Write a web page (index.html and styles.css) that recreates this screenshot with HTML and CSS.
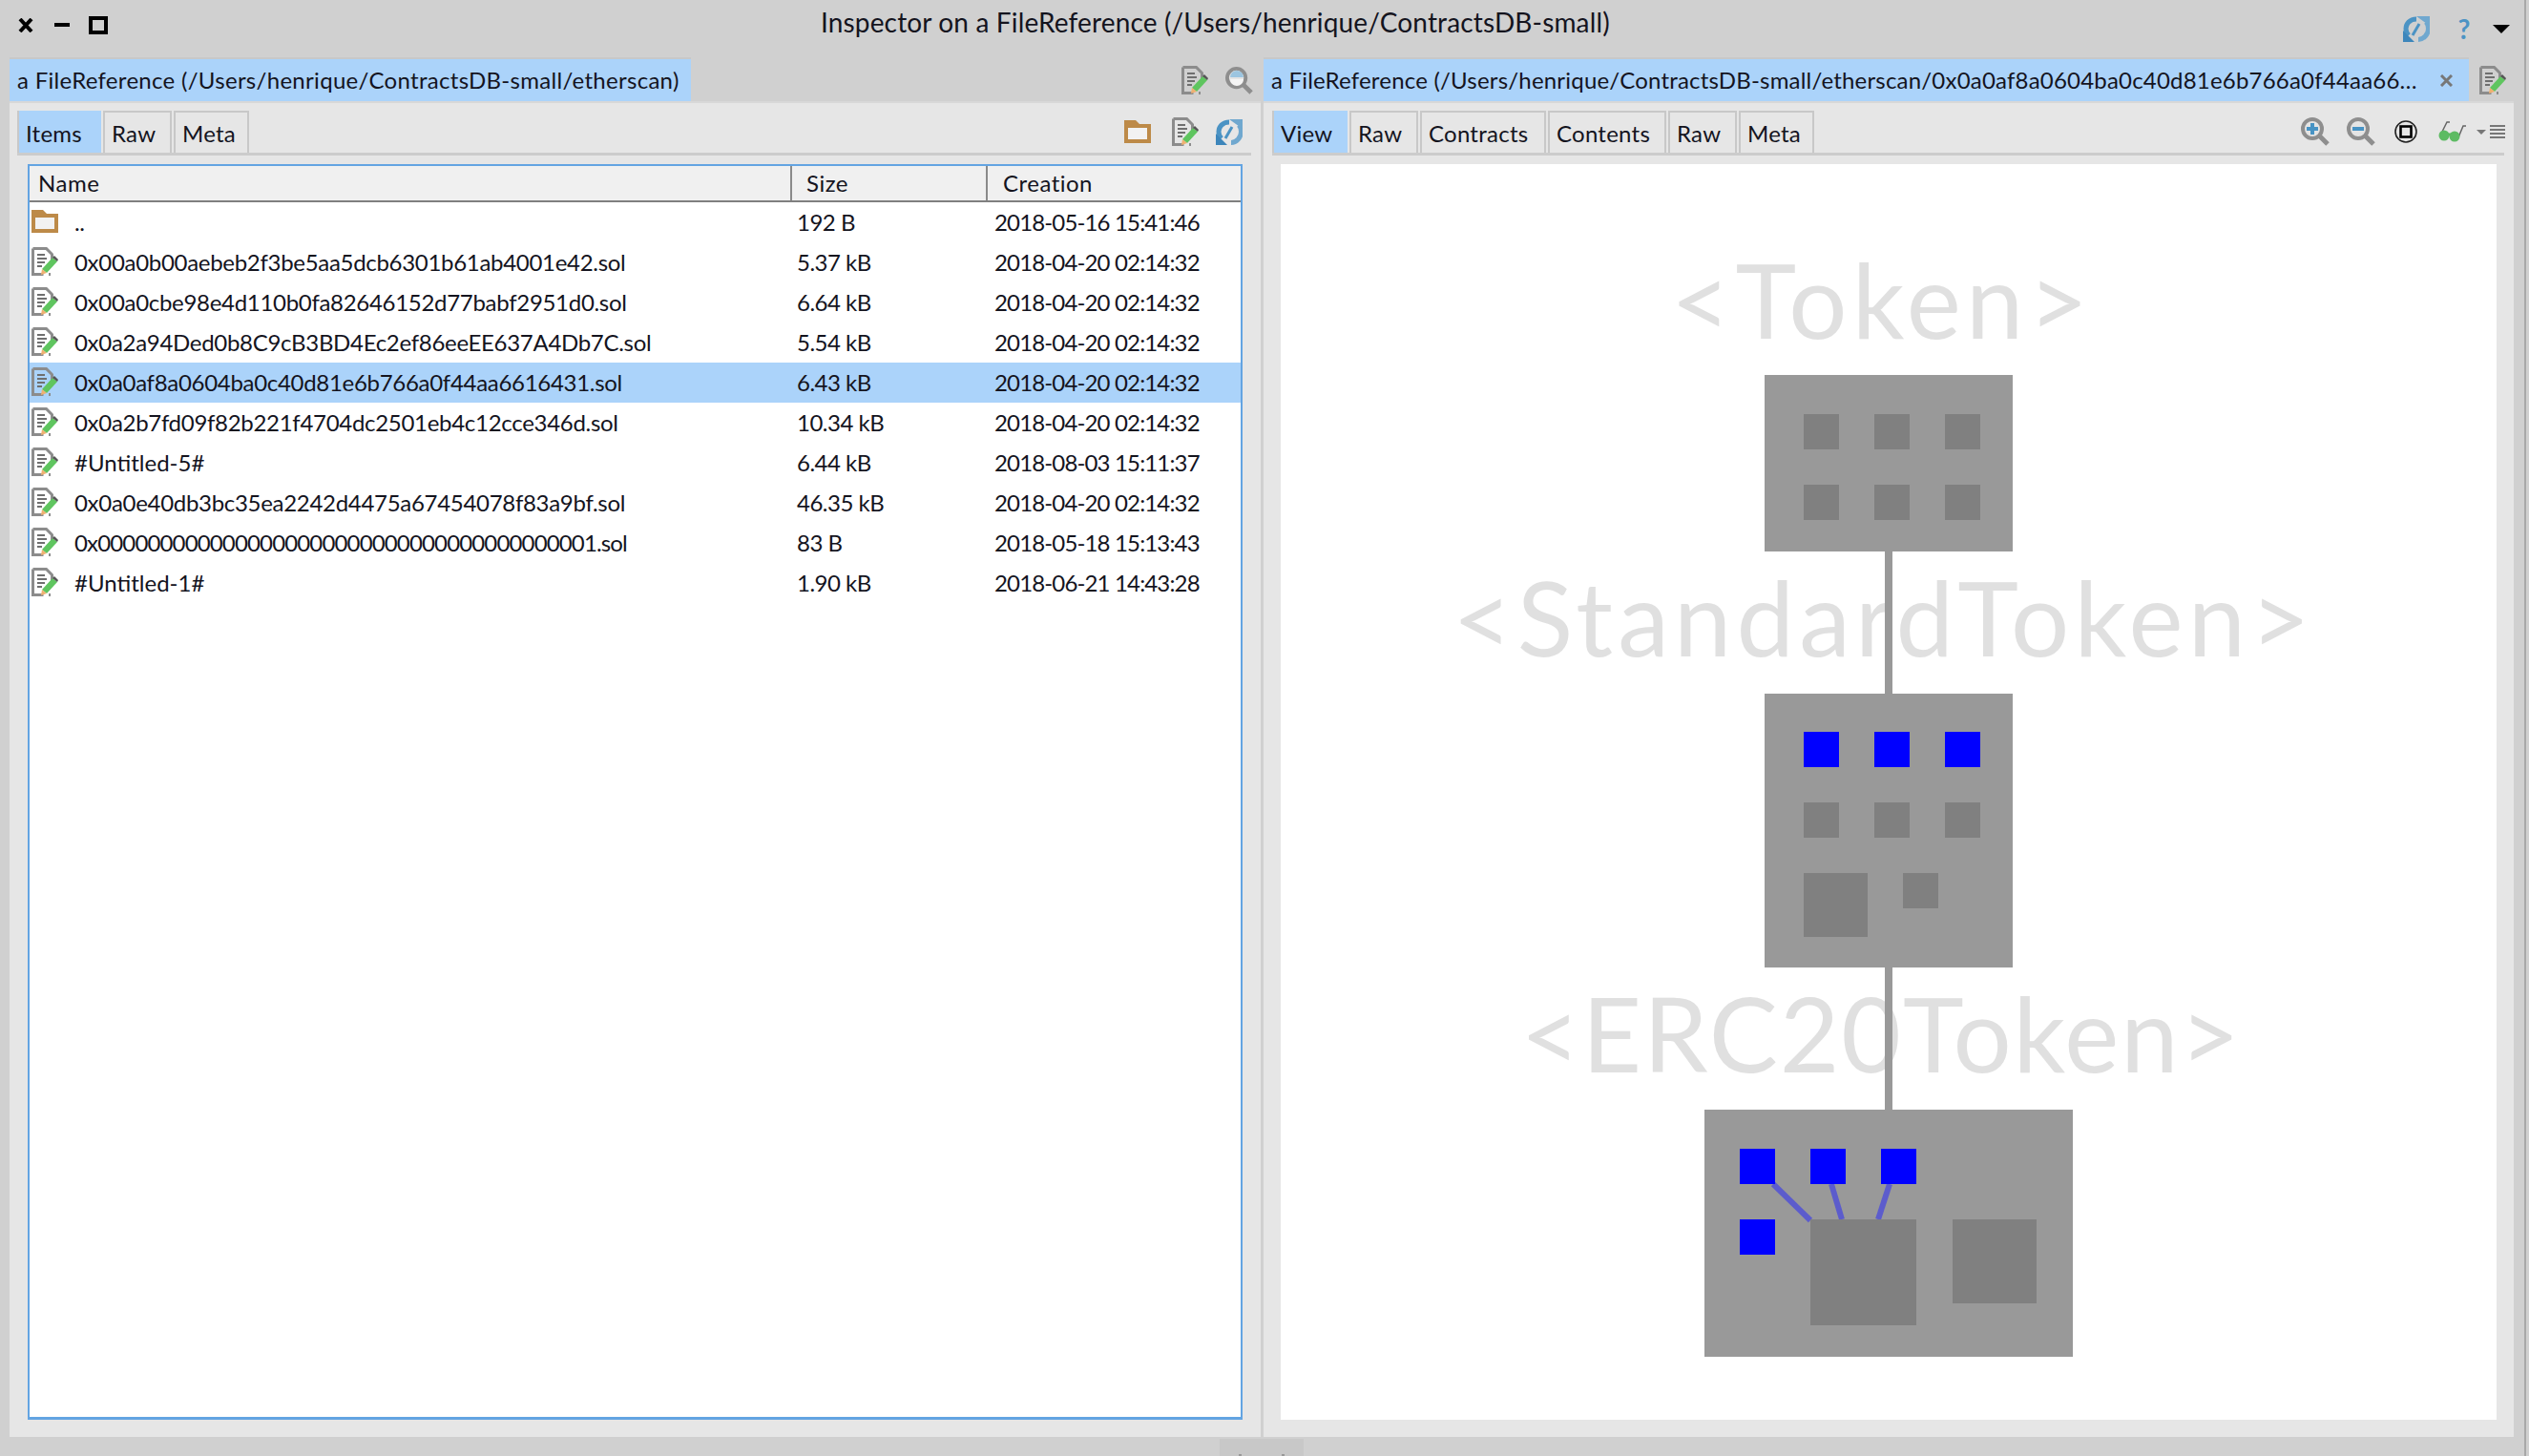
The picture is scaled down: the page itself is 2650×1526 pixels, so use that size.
FILE: index.html
```html
<!DOCTYPE html>
<html>
<head>
	<title>Inspector on a FileReference</title>
	<link rel="stylesheet" href="styles.css">
</head>
<body>
	<svg class="defs" width="0" height="0">
		<symbol id="i-file" viewBox="0 0 28 30">
			<path d="M1.5 1.5h14l6 6v7M1.5 1.5v27h11M20 28.500h-2" fill="none" stroke="#8c8c8c" stroke-width="3"/>
			<path d="M6 8h8M6 12h10M6 16h8M6 20h5" stroke="#6f6f6f" stroke-width="2"/>
			<path d="M11 23l11-12 5 4-11 12z" fill="#5fc55f"/>
			<path d="M22 11l2-2 4 4-1 2z" fill="#555"/>
			<path d="M11 23l5 4-6 2z" fill="#f0b070"/>
		</symbol>
		<symbol id="i-folder" viewBox="0 0 28 24">
			<path d="M0 0h12l4 4h12v20H0z" fill="#bd8a48"/>
			<rect x="4" y="8" width="20" height="12" fill="#f2f2f2"/>
		</symbol>
		<symbol id="i-sync" viewBox="0 0 28 28">
			<path d="M14 4C7 4 3 9 3 14c0 3 1 5 3 7" fill="none" stroke="#4b93c4" stroke-width="5"/>
			<path d="M24 7c2 2 2.500 5 2.500 7 0 6-5 11.500-10.500 11.500" fill="none" stroke="#70a8cf" stroke-width="5"/>
			<path d="M14 1h14v10z" fill="#70a8cf"/>
			<path d="M0 28V16l12 12z" fill="#3d86bb"/>
			<path d="M17 9l-7 12" stroke="#4b93c4" stroke-width="3"/>
		</symbol>
		<symbol id="i-lens" viewBox="0 0 30 30">
			<circle cx="12" cy="12" r="10" fill="#e4e4e4" stroke="#8e8e8e" stroke-width="4"/>
			<path d="M19 19l9 9" stroke="#8e8e8e" stroke-width="5"/>
		</symbol>
	</svg>

	<div class="window">
		<div class="titlebar">
			<div class="winbtns">
				<svg width="16" height="15" viewBox="0 0 16 15"><path d="M2 1l12 13M14 1L2 14" stroke="#000" stroke-width="4"/></svg>
				<span class="minbtn"></span>
				<span class="maxbtn"></span>
			</div>
			<div class="wintitle">Inspector on a FileReference (/Users/henrique/ContractsDB-small)</div>
			<div class="winactions">
				<svg width="28" height="28"><use href="#i-sync"/></svg>
				<span class="help">?</span>
				<span class="menuarrow"></span>
			</div>
		</div>

		<div class="panes">
			<div class="pane pane-left">
				<div class="panehead">
					<div class="panetab tab-left">a FileReference (/Users/henrique/ContractsDB-small/etherscan)</div>
					<div class="headicons">
						<svg width="28" height="30"><use href="#i-file"/></svg>
						<svg width="29" height="29">
							<use href="#i-lens"/>
							<path d="M5 11a7 7 0 0 1 14 0z" fill="#9cc5e0"/>
							<path d="M5 13a7 7 0 0 0 14 0z" fill="#f4f4f4"/>
						</svg>
					</div>
				</div>
				<div class="panebody">
					<div class="subbar">
						<span class="subtab active">Items</span>
						<span class="subtab w72">Raw</span>
						<span class="subtab w79">Meta</span>
						<div class="subicons">
							<svg width="28" height="24"><use href="#i-folder"/></svg>
							<svg width="28" height="30"><use href="#i-file"/></svg>
							<svg width="28" height="28"><use href="#i-sync"/></svg>
						</div>
					</div>
					<div class="filetable">
						<div class="row headrow">
							<span class="hcell c-name">Name</span>
							<span class="hcell c-size">Size</span>
							<span class="hcell c-date">Creation</span>
						</div>
						<div class="row">
							<span class="c-name namecell"><svg width="28" height="24"><use href="#i-folder"/></svg><span>..</span></span>
							<span class="c-size">192 B</span><span class="c-date">2018-05-16 15:41:46</span>
						</div>
						<div class="row">
							<span class="c-name namecell"><svg width="28" height="30"><use href="#i-file"/></svg><span>0x00a0b00aebeb2f3be5aa5dcb6301b61ab4001e42.sol</span></span>
							<span class="c-size">5.37 kB</span><span class="c-date">2018-04-20 02:14:32</span>
						</div>
						<div class="row">
							<span class="c-name namecell"><svg width="28" height="30"><use href="#i-file"/></svg><span>0x00a0cbe98e4d110b0fa82646152d77babf2951d0.sol</span></span>
							<span class="c-size">6.64 kB</span><span class="c-date">2018-04-20 02:14:32</span>
						</div>
						<div class="row">
							<span class="c-name namecell"><svg width="28" height="30"><use href="#i-file"/></svg><span>0x0a2a94Ded0b8C9cB3BD4Ec2ef86eeEE637A4Db7C.sol</span></span>
							<span class="c-size">5.54 kB</span><span class="c-date">2018-04-20 02:14:32</span>
						</div>
						<div class="row selected">
							<span class="c-name namecell"><svg width="28" height="30"><use href="#i-file"/></svg><span>0x0a0af8a0604ba0c40d81e6b766a0f44aa6616431.sol</span></span>
							<span class="c-size">6.43 kB</span><span class="c-date">2018-04-20 02:14:32</span>
						</div>
						<div class="row">
							<span class="c-name namecell"><svg width="28" height="30"><use href="#i-file"/></svg><span>0x0a2b7fd09f82b221f4704dc2501eb4c12cce346d.sol</span></span>
							<span class="c-size">10.34 kB</span><span class="c-date">2018-04-20 02:14:32</span>
						</div>
						<div class="row">
							<span class="c-name namecell"><svg width="28" height="30"><use href="#i-file"/></svg><span class="wide">#Untitled-5#</span></span>
							<span class="c-size">6.44 kB</span><span class="c-date">2018-08-03 15:11:37</span>
						</div>
						<div class="row">
							<span class="c-name namecell"><svg width="28" height="30"><use href="#i-file"/></svg><span>0x0a0e40db3bc35ea2242d4475a67454078f83a9bf.sol</span></span>
							<span class="c-size">46.35 kB</span><span class="c-date">2018-04-20 02:14:32</span>
						</div>
						<div class="row">
							<span class="c-name namecell"><svg width="28" height="30"><use href="#i-file"/></svg><span class="zeros">0x0000000000000000000000000000000000000001.sol</span></span>
							<span class="c-size">83 B</span><span class="c-date">2018-05-18 15:13:43</span>
						</div>
						<div class="row">
							<span class="c-name namecell"><svg width="28" height="30"><use href="#i-file"/></svg><span class="wide">#Untitled-1#</span></span>
							<span class="c-size">1.90 kB</span><span class="c-date">2018-06-21 14:43:28</span>
						</div>
					</div>
				</div>
			</div>

			<div class="pane pane-right">
				<div class="panehead">
					<div class="panetab tab-right">
						<span class="tabtext">a FileReference (/Users/henrique/ContractsDB-small/etherscan/0x0a0af8a0604ba0c40d81e6b766a0f44aa6616431.sol)</span>
						<svg class="tabclose" width="13" height="13" viewBox="0 0 13 13"><path d="M1 1l11 11M12 1L1 12" stroke="#777" stroke-width="3"/></svg>
					</div>
					<div class="headicons">
						<svg width="28" height="30"><use href="#i-file"/></svg>
					</div>
				</div>
				<div class="panebody">
					<div class="subbar">
						<span class="subtab active w78">View</span>
						<span class="subtab w72">Raw</span>
						<span class="subtab w132">Contracts</span>
						<span class="subtab w124">Contents</span>
						<span class="subtab w72">Raw</span>
						<span class="subtab w79">Meta</span>
						<div class="viewicons">
							<svg width="30" height="30" viewBox="0 0 30 30">
								<use href="#i-lens" width="30" height="30"/>
								<path d="M6 12h12M12 6v12" stroke="#4793c4" stroke-width="4"/>
							</svg>
							<svg width="30" height="30" viewBox="0 0 30 30">
								<use href="#i-lens" width="30" height="30"/>
								<path d="M6 12h12" stroke="#4793c4" stroke-width="4"/>
							</svg>
							<svg width="24" height="24" viewBox="0 0 24 24">
								<circle cx="12" cy="12" r="11" fill="none" stroke="#222" stroke-width="1.6"/>
								<rect x="6.500" y="6.500" width="11" height="11" fill="none" stroke="#000" stroke-width="2.600"/>
							</svg>
							<svg width="30" height="24" viewBox="0 0 30 24">
								<path d="M4 12L9 2h3M21 18L26 6h3" fill="none" stroke="#666" stroke-width="1.500"/>
								<path d="M9 15h8" stroke="#5cb85c" stroke-width="3"/>
								<circle cx="6" cy="16" r="5.500" fill="#5dbb63"/>
								<circle cx="17" cy="17" r="5.500" fill="#5dbb63"/>
							</svg>
							<span class="miniarrow"></span>
							<span class="burger"></span>
						</div>
					</div>
					<div class="canvas">
						<svg class="diagram" width="1274" height="1316" viewBox="1342 172 1274 1316">
							<g>
								<text x="1972" y="355" text-anchor="middle" class="lbl">&lt;Token&gt;</text>
								<text x="1974" y="688" text-anchor="middle" class="lbl">&lt;StandardToken&gt;</text>
								<text x="1971" y="1124" text-anchor="middle" class="lbl lbl-erc">&lt;ERC20Token&gt;</text>
							</g>
							<path d="M1979 578V727M1979 1014V1163" stroke="#999" stroke-width="8"/>

							<rect x="1849" y="393" width="260" height="185" fill="#999"/>
							<g fill="#808080">
								<rect x="1890" y="434" width="37" height="37"/>
								<rect x="1964" y="434" width="37" height="37"/>
								<rect x="2038" y="434" width="37" height="37"/>
								<rect x="1890" y="508" width="37" height="37"/>
								<rect x="1964" y="508" width="37" height="37"/>
								<rect x="2038" y="508" width="37" height="37"/>
							</g>

							<rect x="1849" y="727" width="260" height="287" fill="#999"/>
							<g fill="#0000ff">
								<rect x="1890" y="767" width="37" height="37"/>
								<rect x="1964" y="767" width="37" height="37"/>
								<rect x="2038" y="767" width="37" height="37"/>
							</g>
							<g fill="#808080">
								<rect x="1890" y="841" width="37" height="37"/>
								<rect x="1964" y="841" width="37" height="37"/>
								<rect x="2038" y="841" width="37" height="37"/>
								<rect x="1890" y="915" width="67" height="67"/>
								<rect x="1994" y="915" width="37" height="37"/>
							</g>

							<rect x="1786" y="1163" width="386" height="259" fill="#999"/>
							<g stroke="#5c5ccc" stroke-width="6">
								<path d="M1858 1241L1897 1279"/>
								<path d="M1919 1241L1930 1278"/>
								<path d="M1980 1241L1968 1278"/>
							</g>
							<g fill="#0000ff">
								<rect x="1823" y="1204" width="37" height="37"/>
								<rect x="1897" y="1204" width="37" height="37"/>
								<rect x="1971" y="1204" width="37" height="37"/>
								<rect x="1823" y="1278" width="37" height="37"/>
							</g>
							<g fill="#808080">
								<rect x="1897" y="1278" width="111" height="111"/>
								<rect x="2046" y="1278" width="88" height="88"/>
							</g>
						</svg>
					</div>
				</div>
			</div>
			<div class="edgeline"></div>
		</div>
		<div class="statusbar"><span class="grip"><i></i><i></i></span></div>
	</div>
</body>
</html>
```

FILE: styles.css
```css
html, body {
	margin: 0;
	height: 100%;
	overflow: hidden;
}
body {
	background: #d0d0d0;
	font-family: Lato, "Noto Sans", sans-serif;
	font-size: 24px;
	color: #14141e;
}
.defs {
	display: block;
	height: 0;
}
svg {
	display: block;
	flex: none;
}
.window {
	display: flex;
	flex-direction: column;
	height: 1526px;
}

/* title bar */
.titlebar {
	height: 62px;
	flex: none;
	display: flex;
	align-items: flex-start;
}
.winbtns {
	display: flex;
	align-items: center;
	gap: 22px;
	padding: 16px 0 0 19px;
	width: 841px;
	box-sizing: border-box;
	height: 36px;
}
.minbtn {
	width: 16px;
	height: 4px;
	background: #000;
}
.maxbtn {
	width: 20px;
	height: 19px;
	border: 4px solid #000;
	box-sizing: border-box;
	margin-left: -2px;
}
.wintitle {
	font-size: 28px;
	padding-left: 19px;
	line-height: 46px;
	letter-spacing: 0.15px;
	white-space: nowrap;
}
.winactions {
	margin-left: auto;
	display: flex;
	align-items: center;
	gap: 27px;
	padding: 16px 20px 0 0;
}
.help {
	width: 18px;
	text-align: center;
	font-size: 28px;
	font-weight: 700;
	color: #4b93c4;
	line-height: 28px;
}
.menuarrow {
	width: 0;
	height: 0;
	border-left: 9px solid transparent;
	border-right: 9px solid transparent;
	border-top: 9px solid #000;
	margin-left: -6px;
}

/* panes */
.panes {
	height: 1444px;
	flex: none;
	display: flex;
	padding-left: 10px;
}
.pane {
	display: flex;
	flex-direction: column;
	flex: none;
}
.pane-left {
	width: 1311px;
}
.pane-right {
	width: 1310px;
	margin-left: 3px;
}
.edgeline {
	width: 2px;
	background: #a8a8a8;
	margin-left: 11px;
	margin-top: -62px;
	height: 1526px;
	flex: none;
}
.panehead {
	height: 44px;
	flex: none;
	display: flex;
	align-items: stretch;
}
.panetab {
	background: #abd3fa;
	box-sizing: border-box;
	line-height: 44px;
	white-space: nowrap;
	letter-spacing: 0.3px;
	box-shadow: 0 -2px 0 #c8c8c8;
}
.tab-left {
	width: 714px;
	padding-left: 8px;
}
.tab-right {
	width: 1263px;
	padding-left: 8px;
	display: flex;
	align-items: center;
	letter-spacing: 0.2px;
}
.tabtext {
	width: 1212px;
	overflow: hidden;
	text-overflow: ellipsis;
}
.tabclose {
	margin-left: 13px;
}
.headicons {
	margin-left: auto;
	display: flex;
	align-items: center;
	gap: 18px;
	padding-right: 8px;
}
.panebody {
	flex: 1;
	background: #e6e6e6;
	border-top: 2px solid #d8d8d8;
	display: flex;
	flex-direction: column;
	box-sizing: border-box;
}
.pane-left .panebody {
	padding: 8px 10px 18px 8px;
}
.pane-right .panebody {
	padding: 8px 10px 18px 9px;
}

/* sub tabs */
.subbar {
	height: 47px;
	flex: none;
	display: flex;
	align-items: stretch;
	border-bottom: 3px solid #cccccc;
	box-sizing: border-box;
}
.subtab {
	width: 72px;
	box-sizing: border-box;
	padding-left: 7px;
	line-height: 44px;
	letter-spacing: 0.25px;
	border: solid #c8c8c8;
	border-width: 2px 2px 0 2px;
	margin-right: 2px;
}
.subtab.active {
	background: #abd3fa;
	width: 88px;
	border-width: 0 0 0 2px;
	line-height: 48px;
}
.subtab.active.w78 {
	width: 79px;
}
.w79 {
	width: 79px;
}
.w132 {
	width: 132px;
}
.w124 {
	width: 124px;
}
.subicons {
	margin-left: auto;
	display: flex;
	align-items: center;
	gap: 18px;
	padding-right: 9px;
}
.subicons svg:first-child {
	margin-right: 4px;
}
.viewicons {
	margin-left: auto;
	margin-right: -3px;
	display: flex;
	align-items: center;
}
.viewicons svg:nth-child(1) {
	margin-right: 18px;
}
.viewicons svg:nth-child(2) {
	margin-right: 20px;
}
.viewicons svg:nth-child(3) {
	margin-right: 22px;
}
.miniarrow {
	width: 0;
	height: 0;
	border-left: 5px solid transparent;
	border-right: 5px solid transparent;
	border-top: 5px solid #777;
	margin-left: 10px;
}
.burger {
	width: 16px;
	height: 14px;
	margin-left: 4px;
	margin-right: 2px;
	background: repeating-linear-gradient(#777 0 2px, transparent 2px 4px);
}

/* table */
.filetable {
	margin: 9px 0 0 11px;
	width: 1273px;
	flex: 1;
	background: #fff;
	border: solid #63a4e2;
	border-width: 2px 2px 3px 2px;
	box-sizing: border-box;
}
.row {
	height: 42px;
	display: flex;
	align-items: center;
	white-space: nowrap;
	box-sizing: border-box;
	padding-bottom: 2px;
}
.row.selected {
	background: #abd3fa;
}
.headrow {
	background: #f0f0f0;
	border-bottom: 2px solid #808080;
	box-sizing: content-box;
	padding-bottom: 0;
	height: 36px;
	letter-spacing: 0.5px;
}
.c-name {
	width: 799px;
	flex: none;
	box-sizing: border-box;
	letter-spacing: -0.3px;
}
.c-size {
	width: 204px;
	flex: none;
	padding-left: 5px;
	box-sizing: border-box;
	letter-spacing: -0.5px;
}
.c-date {
	flex: 1;
	padding-left: 8px;
	letter-spacing: -0.85px;
}
.zeros {
	letter-spacing: -0.85px;
}
.wide {
	letter-spacing: 0;
}
.hcell {
	height: 100%;
	line-height: 36px;
	letter-spacing: 0.5px;
}
.hcell.c-name {
	width: 799px;
	padding-left: 9px;
	border-right: 2px solid #8a8a8a;
}
.hcell.c-size {
	width: 205px;
	padding-left: 15px;
	border-right: 2px solid #8a8a8a;
}
.hcell.c-date {
	padding-left: 16px;
}
.namecell {
	display: flex;
	align-items: center;
	padding-left: 2px;
}
.namecell svg {
	margin-right: 17px;
}

/* diagram */
.canvas {
	margin: 9px 0 0 9px;
	width: 1274px;
	flex: 1;
	background: #fff;
}
.lbl {
	font-size: 108px;
	fill: #e0e0e0;
	letter-spacing: 5.2px;
}
.lbl-erc {
	letter-spacing: 1.9px;
}

/* bottom */
.statusbar {
	flex: none;
	height: 20px;
	display: flex;
	padding-left: 1278px;
}
.grip {
	width: 88px;
	height: 18px;
	margin-top: 2px;
	background: #c8c8c8;
	display: flex;
	justify-content: space-between;
	padding: 16px 20px 0;
	box-sizing: border-box;
}
.grip i {
	width: 3px;
	height: 2px;
	background: #999;
}
```
